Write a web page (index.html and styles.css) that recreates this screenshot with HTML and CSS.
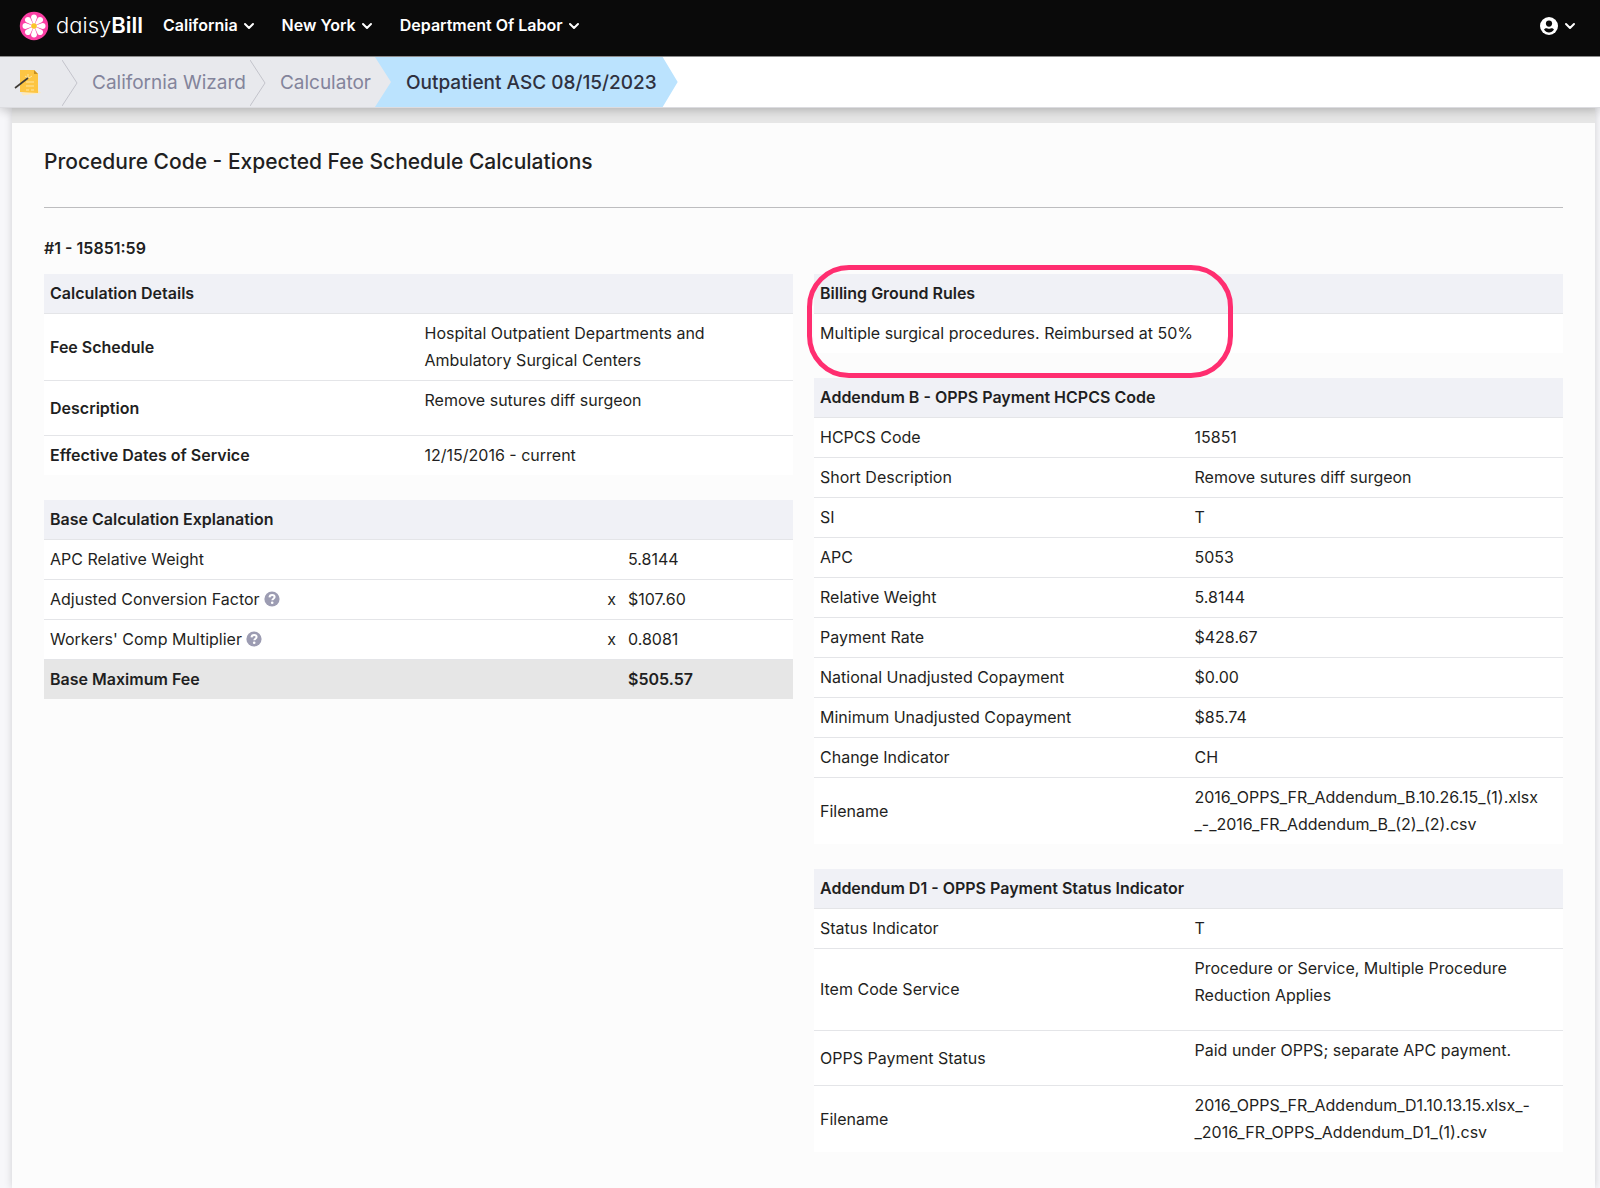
FILE: index.html
```html
<!DOCTYPE html>
<html lang="en">
<head>
<meta charset="utf-8">
<meta name="viewport" content="width=device-width, initial-scale=1">
<title>daisyBill - Outpatient ASC 08/15/2023</title>
<link rel="stylesheet" href="styles.css">
</head>
<body>
<svg class="defs" width="0" height="0" aria-hidden="true">
  <symbol id="chevron" viewBox="0 0 12 8"><path d="M2 2l4 4 4-4" fill="none" stroke="currentColor" stroke-width="2" stroke-linecap="round" stroke-linejoin="round"/></symbol>
  <symbol id="help" viewBox="0 0 16 16"><circle cx="8" cy="8" r="7.600" fill="#9c9cb2"/><path d="M5.500 6.400C5.600 4.700 6.700 3.900 8.100 3.900c1.500 0 2.500.8 2.500 2.100 0 1.700-2.300 1.700-2.300 3.300" fill="none" stroke="#fff" stroke-width="2"/><circle cx="8.200" cy="11.700" r="1.300" fill="#fff"/></symbol>
</svg>

<header class="top">
  <nav class="bar" aria-label="Main">
    <a class="brand" href="#">
      <svg width="30" height="30" viewBox="-15 -15 30 30" aria-hidden="true">
        <circle r="14.200" fill="#fb3fa4"/>
        <g fill="#fff">
          <path id="petal" d="M0 0L-3 -8.500Q-2.800 -11.500 0 -11.500Q2.800 -11.500 3 -8.500z"/>
          <use href="#petal" transform="rotate(45)"/><use href="#petal" transform="rotate(90)"/>
          <use href="#petal" transform="rotate(135)"/><use href="#petal" transform="rotate(180)"/>
          <use href="#petal" transform="rotate(225)"/><use href="#petal" transform="rotate(270)"/>
          <use href="#petal" transform="rotate(315)"/>
        </g>
        <circle r="2.800" fill="#fbc62b"/>
      </svg>
      <span class="wordmark">daisy<b>Bill</b></span>
    </a>
    <button class="menu" type="button">California<svg class="chev"><use href="#chevron"/></svg></button>
    <button class="menu" type="button">New York<svg class="chev"><use href="#chevron"/></svg></button>
    <button class="menu" type="button">Department Of Labor<svg class="chev"><use href="#chevron"/></svg></button>
    <button class="menu account" type="button" aria-label="Account">
      <svg width="18" height="18" viewBox="0 0 18 18" aria-hidden="true"><circle cx="9" cy="9" r="9" fill="#fff"/><circle cx="9" cy="6.600" r="3.100" fill="#0a0a0a"/><path d="M4 12.600c1-1.500 2.600-1.500 3.500-1.100q1.500.5 3 0c.9-.4 2.500-.4 3.500 1.100-1.200 1.900-3 2.900-5 2.900s-3.800-1-5-2.900z" fill="#0a0a0a"/></svg>
      <svg class="chev"><use href="#chevron"/></svg>
    </button>
  </nav>
  <nav aria-label="Breadcrumb">
    <ol class="crumbs">
      <li class="crumb home"><a href="#" aria-label="Home">
        <svg width="28" height="28" viewBox="0 0 28 28" aria-hidden="true"><path d="M7 24l17-3 3 3-18 2.500z" fill="#fde9bd"/><path d="M6 1h14l4 4v19l-18-1z" fill="#fdc543"/><path d="M20 1l4 4h-4z" fill="#c58f22"/><g stroke="#ffe6a3" stroke-width="1"><path d="M11 7l3 2M14 5v4M18 7l-3 2M12 13h8M12 17h8M12 21h3M17 21h3"/></g><path d="M1 19L14 9" stroke="#3d3a35" stroke-width="1.600"/></svg></a>
        <svg class="sep" viewBox="0 0 16 46" aria-hidden="true"><path d="M0 0l15 23L0 46"/></svg></li>
      <li class="crumb"><a href="#">California Wizard</a><svg class="sep" viewBox="0 0 16 46" aria-hidden="true"><path d="M0 0l15 23L0 46"/></svg></li>
      <li class="crumb before-current"><a href="#">Calculator</a></li>
      <li class="crumb current" aria-current="page">Outpatient ASC 08/15/2023</li>
    </ol>
  </nav>
</header>

<main class="card">
  <div class="strip"></div>
  <section class="content">
    <h1>Procedure Code - Expected Fee Schedule Calculations</h1>
    <h2>#1 - 15851:59</h2>
    <div class="columns">
      <div class="col">
        <table class="details">
          <thead><tr><th colspan="2">Calculation Details</th></tr></thead>
          <tbody>
            <tr><th scope="row">Fee Schedule</th><td>Hospital Outpatient Departments and Ambulatory Surgical Centers</td></tr>
            <tr><th scope="row">Description</th><td><p>Remove sutures diff surgeon</p></td></tr>
            <tr><th scope="row">Effective Dates of Service</th><td>12/15/2016 - current</td></tr>
          </tbody>
        </table>
        <table class="base">
          <colgroup><col><col class="op"><col class="amount"></colgroup>
          <thead><tr><th colspan="3">Base Calculation Explanation</th></tr></thead>
          <tbody>
            <tr><td>APC Relative Weight</td><td></td><td>5.8144</td></tr>
            <tr><td>Adjusted Conversion Factor <svg class="help" role="img" aria-label="Help"><use href="#help"/></svg></td><td class="times">x</td><td>$107.60</td></tr>
            <tr><td>Workers' Comp Multiplier <svg class="help" role="img" aria-label="Help"><use href="#help"/></svg></td><td class="times">x</td><td>0.8081</td></tr>
            <tr class="total"><th scope="row">Base Maximum Fee</th><td></td><td>$505.57</td></tr>
          </tbody>
        </table>
      </div>
      <div class="col">
        <div class="marked">
          <table>
            <thead><tr><th>Billing Ground Rules</th></tr></thead>
            <tbody><tr><td>Multiple surgical procedures. Reimbursed at 50%</td></tr></tbody>
          </table>
          <div class="highlight"></div>
        </div>
        <table>
          <thead><tr><th colspan="2">Addendum B - OPPS Payment HCPCS Code</th></tr></thead>
          <tbody>
            <tr><td>HCPCS Code</td><td>15851</td></tr>
            <tr><td>Short Description</td><td>Remove sutures diff surgeon</td></tr>
            <tr><td>SI</td><td>T</td></tr>
            <tr><td>APC</td><td>5053</td></tr>
            <tr><td>Relative Weight</td><td>5.8144</td></tr>
            <tr><td>Payment Rate</td><td>$428.67</td></tr>
            <tr><td>National Unadjusted Copayment</td><td>$0.00</td></tr>
            <tr><td>Minimum Unadjusted Copayment</td><td>$85.74</td></tr>
            <tr><td>Change Indicator</td><td>CH</td></tr>
            <tr><td>Filename</td><td class="file">2016_OPPS_FR_Addendum_B.10.26.15_(1).xlsx<br>_-_2016_FR_Addendum_B_(2)_(2).csv</td></tr>
          </tbody>
        </table>
        <table>
          <thead><tr><th colspan="2">Addendum D1 - OPPS Payment Status Indicator</th></tr></thead>
          <tbody>
            <tr><td>Status Indicator</td><td>T</td></tr>
            <tr><td>Item Code Service</td><td><p>Procedure or Service, Multiple Procedure Reduction Applies</p></td></tr>
            <tr><td>OPPS Payment Status</td><td><p>Paid under OPPS; separate APC payment.</p></td></tr>
            <tr><td>Filename</td><td class="file">2016_OPPS_FR_Addendum_D1.10.13.15.xlsx_-<br>_2016_FR_OPPS_Addendum_D1_(1).csv</td></tr>
          </tbody>
        </table>
      </div>
    </div>
  </section>
</main>
</body>
</html>
```
FILE: styles.css
```css
* { box-sizing: border-box; }
body {
  margin: 0;
  background: #f7f7fa;
  color: #1f1f22;
  font: 16px/27px Inter, "Liberation Sans", sans-serif;
}
.defs { position: absolute; }
p, h1, h2, ol { margin: 0; padding: 0; }

.top {
  position: sticky;
  top: 0;
  z-index: 2;
  background: #fff;
  border-bottom: 1px solid #dcdce0;
  box-shadow: 0 2px 10px rgba(0, 0, 0, .24);
}
.bar {
  display: flex;
  align-items: center;
  height: 57px;
  padding: 0 24px 5px 19px;
  background: #0a0a0a;
  border-bottom: 1px solid #8c8c8c;
  color: #fff;
}
.brand {
  display: flex;
  align-items: center;
  gap: 7px;
  margin-right: 20px;
  color: #fff;
  text-decoration: none;
}
.wordmark {
  font-size: 22px;
  font-weight: 300;
  font-feature-settings: "cv11";
}
.wordmark b { font-weight: 600; }
.menu {
  display: flex;
  align-items: center;
  gap: 5px;
  margin: 0 27px 0 0;
  padding: 0;
  border: 0;
  background: none;
  color: inherit;
  font: 600 16px/27px Inter, "Liberation Sans", sans-serif;
}
.account { gap: 6px; margin: 0 0 0 auto; }
.chev { width: 12px; height: 8px; }

.crumbs {
  display: flex;
  height: 50px;
  list-style: none;
  font-size: 19px;
}
.crumb {
  display: flex;
  align-items: center;
  padding: 1px 0 0 14px;
  background: #e8e9ed;
}
.crumb a {
  display: flex;
  color: #83849b;
  text-decoration: none;
}
.sep {
  width: 16px;
  height: 46px;
  margin-left: 4px;
  fill: none;
  stroke: #c3c4cb;
  stroke-width: 1;
}
.home .sep { margin-left: 20px; }
.before-current { padding-right: 20px; }
.current {
  margin-left: -16px;
  padding: 1px 21px 0 31px;
  background: #bbe3fe;
  color: #2f3140;
  font-weight: 500;
  clip-path: polygon(0 0, calc(100% - 15px) 0, 100% 50%, calc(100% - 15px) 100%, 0 100%, 16px 50%);
}

.card {
  margin: 0 5px 0 12px;
  background: #fcfcfc;
  box-shadow: 0 0 8px rgba(0, 0, 0, .16);
}
.strip { height: 15px; background: #e6e6e6; }
.content { padding: 24px 32px 36px; }
h1 {
  padding-bottom: 30px;
  border-bottom: 1px solid #bdbdbf;
  font-size: 21px;
  font-weight: 500;
  line-height: 30px;
}
h2 {
  padding: 27px 0 12px;
  font-size: 16px;
  font-weight: 600;
}
.columns {
  display: grid;
  grid-template-columns: 1fr 1fr;
  gap: 21px;
}
.col {
  display: flex;
  flex-direction: column;
  gap: 25px;
}
table {
  width: 100%;
  table-layout: fixed;
  border-collapse: separate;
  border-spacing: 0;
  background: #fff;
}
th, td {
  padding: 6px;
  border-bottom: 1px solid #e4e5e8;
  text-align: left;
  font-weight: 400;
}
th { font-weight: 600; }
thead th { background: #f0f1f6; }
tbody tr:last-child > * { border-bottom: 0; }
td p { margin-bottom: 15px; }
.op { width: 36px; }
.amount { width: 171px; }
.times { text-align: right; }
.help {
  width: 16px;
  height: 16px;
  vertical-align: -2px;
}
.total > * { background: #e6e6e6; font-weight: 600; }
.file { white-space: nowrap; }
.marked { position: relative; }
.highlight {
  position: absolute;
  top: -9px;
  left: -7px;
  width: 426px;
  height: 113px;
  border: 5px solid #ff2e70;
  border-radius: 42px;
  pointer-events: none;
}
```
